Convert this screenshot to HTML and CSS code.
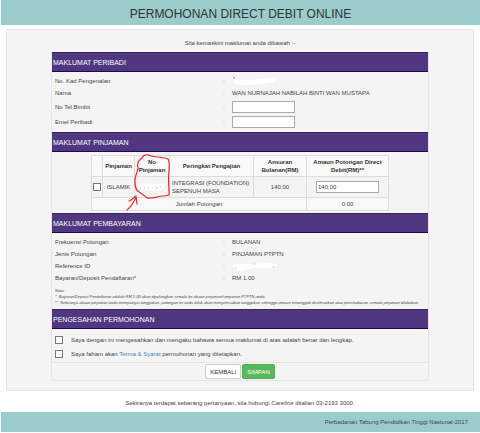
FILE: index.html
```html
<!DOCTYPE html>
<html lang="ms">
<head>
    <meta charset="UTF-8">
    <meta name="viewport" content="width=device-width, initial-scale=1.0">
    <title>Permohonan Direct Debit Online</title>
    <link rel="stylesheet" href="styles.css">
</head>
<body>
    <header class="page-header">
        <h1>PERMOHONAN DIRECT DEBIT ONLINE</h1>
    </header>

    <main class="panel">
        <p class="intro">Sila kemaskini maklumat anda dibawah :-</p>

        <form class="form-box">
            <h2 class="section-title">MAKLUMAT PERIBADI</h2>
            <div class="details personal">
                <div class="row">
                    <span class="label">No. Kad Pengenalan</span>
                    <span class="colon">:</span>
                    <svg class="redacted" width="44" height="9" viewBox="0 0 44 9"><path d="M1 3 C8 1 14 4 22 3 S38 0 42 2 S38 6 28 7 S8 9 3 7 Z" fill="#fff"/><path d="M1 1 h2" stroke="#888" stroke-width="1"/></svg>
                </div>
                <div class="row">
                    <span class="label">Nama</span>
                    <span class="colon">:</span>
                    <span class="name">WAN NURNAJAH NABILAH BINTI WAN MUSTAPA</span>
                </div>
                <div class="row input-row">
                    <label class="label" for="phone">No Tel Bimbit</label>
                    <span class="colon">:</span>
                    <input type="text" class="text-input" id="phone">
                </div>
                <div class="row input-row">
                    <label class="label" for="email">Emel Peribadi</label>
                    <span class="colon">:</span>
                    <input type="text" class="text-input" id="email">
                </div>
            </div>

            <h2 class="section-title">MAKLUMAT PINJAMAN</h2>
            <div class="loan">
                <table class="loan-table">
                    <colgroup>
                        <col class="col-check">
                        <col class="col-type">
                        <col class="col-number">
                        <col class="col-level">
                        <col class="col-monthly">
                        <col class="col-amount">
                    </colgroup>
                    <thead>
                        <tr>
                            <th></th>
                            <th>Pinjaman</th>
                            <th>No Pinjaman</th>
                            <th>Peringkat Pengajian</th>
                            <th>Ansuran Bulanan(RM)</th>
                            <th>Amaun Potongan Direct Debit(RM)**</th>
                        </tr>
                    </thead>
                    <tbody>
                        <tr class="loan-row">
                            <td><input type="checkbox" class="check" aria-label="Pilih pinjaman"></td>
                            <td>ISLAMIK</td>
                            <td><svg class="redacted" width="28" height="8" viewBox="0 0 28 8"><path d="M2 2 C8 0 20 1 26 1 S27 6 22 7 S6 7 3 6 Z" fill="#fff"/><path d="M3 5 h1 M7 5 h1 M11 5 h1 M15 5 h1 M19 5 h2 M23 4 h1" stroke="#bbb" stroke-width="1"/></svg></td>
                            <td class="level">INTEGRASI (FOUNDATION) SEPENUH MASA</td>
                            <td>140.00</td>
                            <td><input type="text" class="text-input" value="140.00" aria-label="Amaun potongan"></td>
                        </tr>
                        <tr class="total-row">
                            <td colspan="5">Jumlah Potongan</td>
                            <td>0.00</td>
                        </tr>
                    </tbody>
                </table>
                <!-- Red marker around the loan number column -->
                <svg class="marker" width="46" height="58" viewBox="0 0 46 58" fill="none" stroke="#f0282d" stroke-width="1.2" stroke-linecap="round" stroke-linejoin="round">
                    <path d="M17 5 C13 8 12 10 13 15 C13 19 10 22 10 27 C10 32 10 36 13 38 C16 41 20 42 22 45 C28 46 33 43 38 43 C42 43 45 42 44 40 C44 32 43 25 44 18 C44 13 45 8 43 6 C36 3 29 5 24 2 C20 1 18 3 15 7"/>
                    <path d="M2 57 C7 53 9 49 11 44 M4 48 C7 47 9 44 11 43 L12 51"/>
                </svg>
            </div>

            <h2 class="section-title">MAKLUMAT PEMBAYARAN</h2>
            <div class="details payment">
                <div class="row">
                    <span class="label">Frekuensi Potongan</span>
                    <span class="colon">:</span>
                    <span class="value">BULANAN</span>
                </div>
                <div class="row">
                    <span class="label">Jenis Potongan</span>
                    <span class="colon">:</span>
                    <span class="value">PINJAMAN PTPTN</span>
                </div>
                <div class="row">
                    <span class="label">Reference ID</span>
                    <span class="colon">:</span>
                    <svg class="redacted" width="46" height="9" viewBox="0 0 46 9"><path d="M0 3 C8 0 18 3 24 2 S40 1 44 2 S43 6 36 6 S20 6 12 8 S1 6 0 3 Z" fill="#fff"/><path d="M3 6 h1 M22 2 h1 M41 5 h1" stroke="#aaa" stroke-width="1"/></svg>
                </div>
                <div class="row">
                    <span class="label">Bayaran/Deposit Pendaftaran*</span>
                    <span class="colon">:</span>
                    <span class="value">RM 1.00</span>
                </div>
                <div class="notes">
                    <p>Nota:</p>
                    <p>*&nbsp; Bayaran/Deposit Pendaftaran adalah RM 1.00 akan dipulangkan semula ke akaun pinjaman/simpanan PTPTN anda.</p>
                    <p>**&nbsp; Sekiranya akaun pinjaman anda mempunyai tunggakan, potongan ini anda tidak akan menyelesaikan tunggakan sehingga amaun tertunggak diselesaikan atau penstrukturan semula pinjaman dilakukan.</p>
                </div>
            </div>

            <h2 class="section-title">PENGESAHAN PERMOHONAN</h2>
            <div class="confirm">
                <div class="confirm-item">
                    <input type="checkbox" class="check" id="agree-info">
                    <label for="agree-info">Saya dengan ini mengesahkan dan mengaku bahawa semua maklumat di atas adalah benar dan lengkap.</label>
                </div>
                <div class="confirm-item">
                    <input type="checkbox" class="check" id="agree-terms">
                    <label for="agree-terms">Saya faham akan <a href="#">Terma &amp; Syarat</a> permohonan yang ditetapkan.</label>
                </div>
            </div>
            <div class="actions">
                <button type="button" class="btn">KEMBALI</button>
                <button type="submit" class="btn btn-save">SIMPAN</button>
            </div>
        </form>
    </main>

    <p class="contact">Sekiranya terdapat sebarang pertanyaan, sila hubungi <em>Careline</em> ditalian 03-2193 3000.</p>
    <footer class="page-footer">Perbadanan Tabung Pendidikan Tinggi Nasional-2017</footer>
</body>
</html>
```
FILE: styles.css
```css
* {
    box-sizing: border-box;
}

body {
    margin: 0;
    font-family: "Liberation Sans", Arial, sans-serif;
    font-size: 6px;
    line-height: 8px;
    color: #444;
    background: #fff;
}

h1, h2, p {
    margin: 0;
    font-weight: normal;
}

a {
    color: #4183c4;
    text-decoration: none;
}

.page-header {
    height: 25px;
    margin-left: 1px;
    background: #9bcccc;
    text-align: center;
}

.page-header h1 {
    font-size: 12px;
    line-height: 28px;
    color: #333;
}

.panel {
    margin: 4px 6px 0;
    padding: 9px 44px 9px;
    background: #f4f4f4;
    border: 1px solid #e3e3e3;
    border-radius: 2px;
}

.intro {
    margin-bottom: 5px;
    text-align: center;
}

.form-box {
    border: 1px solid #e6e6e6;
    border-top: none;
}

.section-title {
    height: 20px;
    padding-left: 1px;
    background: #4f387f;
    border-top: 1px solid #3b2370;
    border-bottom: 1px solid #23005f;
    color: #fff;
    font-size: 7px;
    line-height: 19px;
}

.details {
    padding: 3px;
}

.personal {
    height: 60px;
}

.payment {
    height: 76px;
}

.row {
    display: grid;
    grid-template-columns: 168px 9px 1fr;
    align-items: center;
    min-height: 12px;
}

.colon {
    color: #889;
}

.input-row {
    min-height: 15px;
}

.text-input {
    width: 63px;
    height: 12px;
    margin: 0;
    padding: 0 1px;
    border: 1px solid #aaa;
    background: #fff;
    color: #444;
    font-family: inherit;
    font-size: 6px;
}

.redacted {
    display: block;
}

.loan {
    position: relative;
    height: 61px;
    padding: 3px 39px 0;
}

.loan-table {
    width: 100%;
    table-layout: fixed;
    border-collapse: collapse;
    background: #f9f9f9;
    text-align: center;
}

.col-check {
    width: 11px;
}

.col-type {
    width: 32px;
}

.col-number {
    width: 35px;
}

.col-level {
    width: 84px;
}

.col-monthly {
    width: 53px;
}

.loan-table th,
.loan-table td {
    height: 21px;
    padding: 0 2px;
    border: 1px solid #ddd;
}

.loan-table th {
    color: #333;
}

.loan-row {
    background: #f4f4f4;
}

.loan-table .level {
    text-align: left;
}

.loan-table .total-row td {
    height: 13px;
}

.loan-table td:first-child {
    padding: 0 1px;
}

.loan-table .check {
    display: block;
}

.marker {
    position: absolute;
    left: 73px;
    top: 1px;
}

.check {
    appearance: none;
    flex: none;
    width: 8px;
    height: 8px;
    margin: 0;
    border: 1px solid #777;
    background: #fff;
}

.check:checked {
    background: #4f387f;
}

.notes {
    padding-top: 4px;
    font-size: 4px;
    font-style: italic;
    line-height: 6px;
    white-space: nowrap;
}

.confirm {
    display: flex;
    flex-direction: column;
    gap: 6px;
    padding: 7px 3px 4px;
}

.confirm-item {
    display: flex;
    align-items: center;
    gap: 8px;
}

.actions {
    display: flex;
    justify-content: center;
    gap: 1px;
    padding: 1px;
    border-top: 1px solid #e6e6e6;
}

.btn {
    height: 15px;
    padding: 0 4px;
    border: 1px solid #ccc;
    border-radius: 2px;
    background: #fff;
    color: #333;
    font-family: inherit;
    font-size: 6px;
    cursor: pointer;
}

.btn-save {
    border-color: #4cae4c;
    background: #5cb85c;
    color: #fff;
}

.contact {
    padding: 8px 0 5px;
    text-align: center;
}

.page-footer {
    margin-left: 1px;
    padding: 6px 12px;
    background: #9bcccc;
    text-align: right;
}
```
